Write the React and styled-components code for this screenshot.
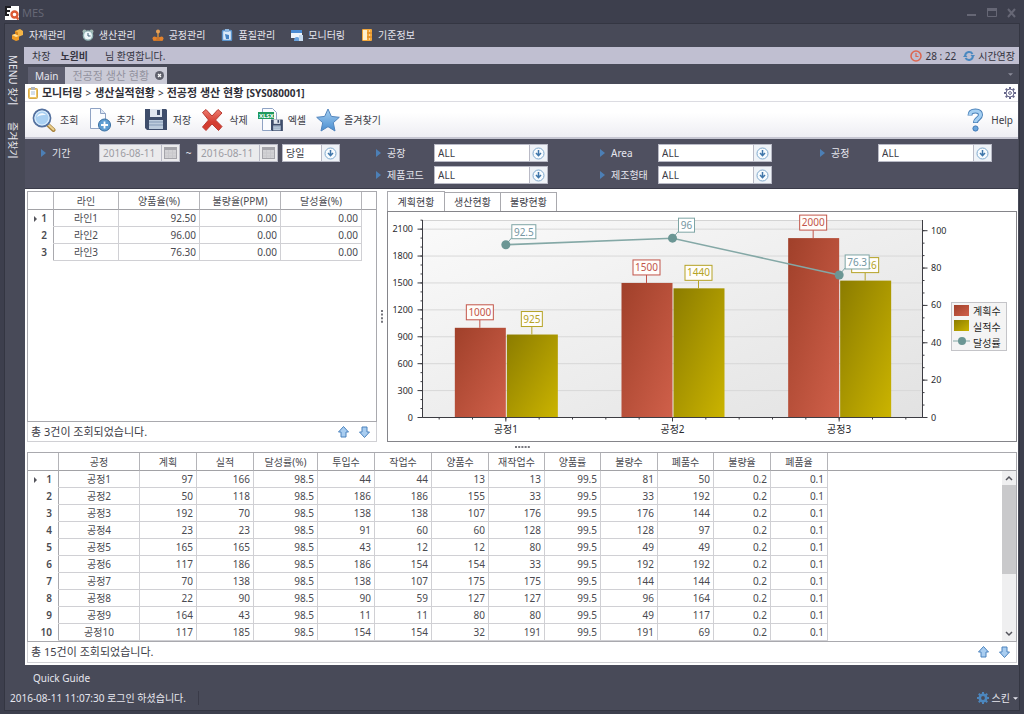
import React from "react";
import styled, { createGlobalStyle } from "styled-components";

const Global = createGlobalStyle`
  *, *::before, *::after { box-sizing: border-box; }
  body { margin: 0; background: #3d3f4d; }
  body, button, input, select, table {
    font-family: "Noto Sans", "Noto Sans CJK KR", sans-serif;
    font-size: 10px;
    line-height: 14px;
  }
  button { margin: 0; padding: 0; border: 0; background: none; color: inherit; cursor: pointer; }
  a { color: inherit; text-decoration: none; }
  svg { display: block; flex: none; }
`;

/* ---------- window shell ---------- */

const Window = styled.div`
  display: flex;
  flex-direction: column;
  min-height: 100vh;
  padding: 0 4px 3px;
  background: #3d3f4d;
  color: #e6e6ee;
`;
const TitleBar = styled.header`
  display: flex;
  align-items: center;
  gap: 3px;
  height: 23px;
  padding: 2px 4px 0 1px;
  color: #666775;
  font-size: 11px;
`;
const WindowButtons = styled.div`
  display: flex;
  gap: 10px;
  margin-left: auto;
`;
const Frame = styled.div`
  display: flex;
  flex: 1;
  flex-direction: column;
  border: 1px solid #343642;
  background: #484a58;
`;
const MenuBar = styled.nav`
  display: flex;
  align-items: center;
  gap: 16px;
  height: 23px;
  padding: 0 7px 2px;
`;
const MenuItem = styled.button`
  display: flex;
  align-items: center;
  gap: 5px;
  white-space: nowrap;
`;
const Body = styled.div`
  display: flex;
`;
const Sidebar = styled.aside`
  display: flex;
  flex: none;
  flex-direction: column;
  align-items: center;
  gap: 16px;
  width: 19px;
  padding: 8px 3px 0 0;
`;
const SideTab = styled.button`
  writing-mode: vertical-rl;
  text-orientation: sideways;
  white-space: nowrap;
`;
const Main = styled.main`
  display: flex;
  flex: 1;
  flex-direction: column;
  min-width: 0;
`;
const WelcomeBar = styled.div`
  display: flex;
  align-items: center;
  height: 17px;
  padding: 0 4px 0 8px;
  background: #c0bfd1;
  color: #34343f;
  white-space: nowrap;
`;
const UserName = styled.b`
  margin: 0 17px 0 10px;
`;
const Session = styled.div`
  display: flex;
  align-items: center;
  gap: 3px;
  margin-left: auto;
`;
const ExtendButton = styled.button`
  display: flex;
  align-items: center;
  gap: 3px;
  margin-left: 4px;
`;
const TabStrip = styled.div`
  display: flex;
  align-items: flex-end;
  height: 20px;
  padding: 0 6px 0 4px;
`;
const PageTab = styled.div`
  display: flex;
  align-items: center;
  gap: 6px;
  height: 17px;
  padding: ${(p) => (p.$active ? "0 3px 0 7px" : "0 7px")};
  background: ${(p) => (p.$active ? "#cacad6" : "#5d5e6f")};
  color: ${(p) => (p.$active ? "#92929e" : "#e6e6ee")};
  font-size: ${(p) => (p.$active ? "11px" : "10px")};
`;
const TabMenu = styled.button`
  margin: 0 0 8px auto;
`;

/* ---------- page ---------- */

const Page = styled.div`
  margin: 0 1px;
  background: #fff;
  color: #3c3c46;
`;
const Breadcrumb = styled.div`
  display: flex;
  align-items: center;
  gap: 4px;
  height: 18px;
  padding: 0 2px 0 3px;
  border-bottom: 1px solid #dcdce2;
  color: #2f2f38;
  font-size: 11px;
  font-weight: 700;
`;
const Crumbs = styled.span`
  display: flex;
  align-items: center;
  gap: 3px;
  white-space: nowrap;
`;
const CrumbMark = styled.span`
  font-size: 10px;
  font-weight: 400;
`;
const ScreenCode = styled.span`
  font-size: 10px;
`;
const GearButton = styled.button`
  margin-left: auto;
`;
const Toolbar = styled.div`
  display: flex;
  align-items: center;
  gap: 10px;
  height: 37px;
  padding: 0 5px 0 7px;
  border-bottom: 2px solid #c6c6d2;
  background: linear-gradient(#fff 30%, #eeeef3);
`;
const Tool = styled.button`
  display: flex;
  align-items: center;
  gap: 4px;
  white-space: nowrap;
  &:last-child { margin-left: auto; }
`;
const Filters = styled.form`
  display: grid;
  grid-template-columns: 335fr 224fr 220fr 198fr;
  row-gap: 4px;
  padding: 5px 0 4px 16px;
  border-bottom: 1px solid #3a3b49;
  background: #4f5060;
`;
const Field = styled.div`
  display: flex;
  align-items: center;
  grid-column: ${(p) => p.$column};
  height: 18px;
  color: #e6e6ee;
`;
const FieldLabel = styled.label`
  display: flex;
  align-items: center;
  gap: 6px;
  width: 58px;
  white-space: nowrap;
  &::before {
    content: "";
    border: 4px solid transparent;
    border-left: 5px solid #4c7fb6;
    border-right: 0;
  }
`;
const Control = styled.span`
  position: relative;
  display: flex;
  width: ${(p) => p.$width};
  height: 18px;
  border: 1px solid #b9bac6;
  background: ${(p) => (p.$off ? "#ebebed" : "#fff")};
`;
const Select = styled.select`
  flex: 1;
  min-width: 0;
  padding: 0 20px 0 3px;
  border: 0;
  background: transparent;
  color: #3c3c46;
  appearance: none;
`;
const DateInput = styled.input`
  flex: 1;
  min-width: 0;
  padding: 0 0 0 3px;
  border: 0;
  background: transparent;
  color: #9c9ca3;
`;
const DropMark = styled.span`
  position: absolute;
  top: 0;
  right: 0;
  display: grid;
  place-items: center;
  width: 18px;
  height: 16px;
  border-left: 1px solid #b9bac6;
  background: #eff3f8;
  pointer-events: none;
`;
const CalendarButton = styled.button`
  display: grid;
  place-items: center;
  width: 18px;
  border-left: 1px solid #b9bac6;
`;
const Tilde = styled.span`
  width: 17px;
  text-align: center;
`;
const PeriodGap = styled.span`
  width: 4px;
`;

/* ---------- panels ---------- */

const Workspace = styled.div`
  padding: 2px 1px 2px 2px;
`;
const Split = styled.div`
  display: flex;
`;
const LinePanel = styled.section`
  display: flex;
  flex: 0 0 350px;
  flex-direction: column;
`;
const GridBox = styled.div`
  position: relative;
  flex: 1;
  border: 1px solid #a9a9ae;
`;
const Grid = styled.table`
  width: 100%;
  border-spacing: 0;
  table-layout: fixed;
  color: #4a4a50;
`;
const Col = styled.col`
  width: ${(p) => p.$width};
`;
const Th = styled.th`
  height: 18px;
  padding: 0;
  border-right: 1px solid #b4b4b8;
  border-bottom: 1px solid #a2a2a6;
  font-weight: 400;
  white-space: nowrap;
  &:last-child { border-right: 0; }
`;
const Td = styled.td`
  height: 17px;
  padding: ${(p) => (p.$center ? "0" : "0 3px 0 0")};
  border-right: 1px solid #d0d0d4;
  border-bottom: 1px solid #d0d0d4;
  line-height: 12px;
  text-align: ${(p) => (p.$center ? "center" : "right")};
`;
const RowHead = styled.th`
  height: 17px;
  padding: 0 6px 0 0;
  border-right: 1px solid #a9a9ae;
  border-bottom: 1px solid transparent;
  font-weight: 600;
  line-height: 12px;
  text-align: right;
`;
const Marker = styled.span`
  display: inline-block;
  margin-right: ${(p) => p.$gap};
  border: 3px solid transparent;
  border-left: 3px solid #55555c;
  border-right: 0;
`;
const GridFooter = styled.div`
  display: flex;
  align-items: center;
  gap: 10px;
  height: ${(p) => p.$height};
  padding: 0 6px 0 3px;
  border: 1px solid #d0d0d4;
  border-top: 0;
  font-size: ${(p) => p.$size};
`;
const Count = styled.span`
  flex: 1;
`;
const Splitter = styled.div`
  display: flex;
  flex: none;
  align-items: center;
  justify-content: center;
  width: ${(p) => (p.$vertical ? "10px" : "auto")};
  height: ${(p) => (p.$vertical ? "auto" : "10px")};
`;
const ChartPanel = styled.section`
  flex: 1;
  min-width: 0;
`;
const ChartTabs = styled.div`
  display: flex;
  align-items: flex-end;
  height: 20px;
`;
const ChartTab = styled.button`
  width: ${(p) => (p.$active ? "58px" : "56px")};
  height: ${(p) => (p.$active ? "20px" : "19px")};
  border: 1px solid #a9a9ae;
  border-bottom: 0;
  border-left-width: ${(p) => (p.$active ? "1px" : "0")};
`;
const ChartBox = styled.div`
  border: 1px solid #85858a;
`;
const Chart = styled.svg`
  width: 100%;
  height: auto;
  font-size: 10px;
`;
const AxisText = styled.text`
  fill: #2a2a2e;
  font-size: 9px;
`;
const Scrollbar = styled.div`
  position: absolute;
  top: 18px;
  right: 0;
  bottom: 0;
  display: flex;
  flex-direction: column;
  align-items: center;
  width: 14px;
  background: #efeff0;
`;
const ScrollButton = styled.button`
  display: grid;
  place-items: center;
  width: 14px;
  height: 14px;
`;
const Thumb = styled.div`
  width: 14px;
  height: 89px;
  margin-bottom: auto;
  background: #c9c9cb;
`;

/* ---------- footer ---------- */

const QuickGuide = styled.div`
  padding: 6px 0 6px 28px;
`;
const StatusBar = styled.footer`
  display: flex;
  align-items: center;
  height: 14px;
  padding: 0 1px 0 5px;
`;
const LoginText = styled.span`
  padding-right: 12px;
  border-right: 1px solid #3a3b48;
`;
const SkinButton = styled.button`
  display: flex;
  align-items: center;
  gap: 3px;
  margin-left: auto;
`;

/* ---------- icons ---------- */

const Svg = ({ w = 12, h = w, box, children }) => (
  <svg width={w} height={h} viewBox={box || `0 0 ${w} ${h}`} fill="none" aria-hidden="true">{children}</svg>
);

const LogoIcon = () => (
  <Svg w={14}>
    <path d="M0 0h14v14H0z" fill="#fff" />
    <path d="M0 1h6M0 5h5M0 9h4M1 1v8" stroke="#1d1d22" strokeWidth="2" />
    <circle cx="9.5" cy="8.5" r="3" stroke="#dc5a35" strokeWidth="2.4" />
    <path d="M11 10l2.5 3.5" stroke="#dc5a35" strokeWidth="2.4" />
  </Svg>
);
const BoxIcon = () => (
  <Svg>
    <path d="M3 2l5-2 3 2v4L6 8 3 6z" fill="#f6b545" />
    <path d="M3 2l3 1.5V8L3 6z" fill="#d7851b" />
    <path d="M0 6l3-1 4 2v4l-3 1-4-2z" fill="#f09b24" />
    <path d="M0 6l4 2 3-1-4-2z" fill="#ffe09a" />
  </Svg>
);
const AlarmIcon = () => (
  <Svg>
    <circle cx="2.5" cy="2.5" r="2" fill="#9fb6b0" />
    <circle cx="9.5" cy="2.5" r="2" fill="#9fb6b0" />
    <circle cx="6" cy="6.5" r="4.6" fill="#eef8fa" stroke="#93b6b6" strokeWidth="1.4" />
    <path d="M6 4v3h2.5" stroke="#3f5f74" />
  </Svg>
);
const ProcessIcon = () => (
  <Svg>
    <path d="M6 3v5" stroke="#c98a42" strokeWidth="1.6" />
    <path d="M1 12l2-4h6l2 4z" fill="#c9762c" />
    <circle cx="6" cy="2.5" r="2" fill="#e8a052" />
    <circle cx="2.5" cy="9.5" r="2" fill="#e3822c" />
    <circle cx="9.5" cy="9.5" r="2" fill="#e3822c" />
  </Svg>
);
const QualityIcon = () => (
  <Svg>
    <rect x="1.5" y="1.5" width="9" height="10" rx="1" fill="#dcebfa" stroke="#5b93cc" strokeWidth="1.4" />
    <path d="M4 0h4v3H4z" fill="#8fb8e2" />
    <path d="M4 5l4 1v4H5z" fill="#4683c4" />
  </Svg>
);
const MonitorIcon = () => (
  <Svg>
    <path d="M0 1h11v8H0z" fill="#eef4fb" />
    <path d="M0 1h11v3H0z" fill="#4b8bd3" />
    <path d="M3 12c0-3 1-4 3-4s2 1 3 2v2z" fill="#6ba3de" />
    <path d="M8 6h4v6H8z" fill="#c7dbf0" />
  </Svg>
);
const CabinetIcon = () => (
  <Svg>
    <rect x="1" y="0" width="10" height="12" rx="1" fill="#f3a83c" />
    <path d="M2 1h4v10H2z" fill="#fff1cf" />
    <path d="M6 4h5M6 8h5" stroke="#d98423" />
    <path d="M8 2h1M8 6h1M8 10h1" stroke="#fff" />
  </Svg>
);
const ClockIcon = () => (
  <Svg>
    <circle cx="6" cy="6" r="5" stroke="#dd6650" strokeWidth="1.5" />
    <path d="M6 3v3.5h2.5" stroke="#dd6650" strokeWidth="1.2" />
  </Svg>
);
const RefreshIcon = () => (
  <Svg>
    <path d="M2.200 5A4 4 0 019.500 4M9.800 7A4 4 0 012.500 8" stroke="#4a88c0" strokeWidth="2" />
    <path d="M7.500 5H12L9.800 8zM0 7h4.500L2.200 4z" fill="#4a88c0" />
  </Svg>
);
const CloseIcon = () => (
  <Svg w={9}>
    <circle cx="4.5" cy="4.5" r="4.5" fill="#5f606c" />
    <path d="M3 3l3 3M6 3L3 6" stroke="#fff" strokeWidth="1.2" />
  </Svg>
);
const ClipboardIcon = () => (
  <Svg w={10} h={12}>
    <rect x=".5" y="1.5" width="9" height="10" rx="1" fill="#ecc565" stroke="#d9aa4a" />
    <path d="M2 3h6v7H2z" fill="#fff" />
    <path d="M3 0h4v3H3z" fill="#b0b4bd" />
    <path d="M3 5h4M3 7h4" stroke="#a9bdd8" />
  </Svg>
);
const teeth = [0, 45, 90, 135, 180, 225, 270, 315];
const GearIcon = ({ color, solid }) => (
  <Svg w={12}>
    {teeth.map((a) => (
      <path key={a} d="M6 0v2.500" stroke={color} strokeWidth="2" transform={`rotate(${a} 6 6)`} />
    ))}
    <circle cx="6" cy="6" r={solid ? 3.2 : 4} stroke={color} strokeWidth={solid ? 2.6 : 1} fill={solid ? "none" : "#fff"} />
    {!solid && <circle cx="6" cy="6" r="1.4" stroke={color} />}
  </Svg>
);
const SearchIcon = () => (
  <Svg w={24}>
    <path d="M15 16l6.500 6" stroke="#a8833d" strokeWidth="4" strokeLinecap="round" />
    <path d="M15.500 16l6 5.500" stroke="#ecd08e" strokeWidth="2" strokeLinecap="round" />
    <circle cx="10" cy="10" r="8.5" fill="#a9d0f2" stroke="#54719f" strokeWidth="1.8" />
    <circle cx="10" cy="10" r="7" stroke="#d9ecfb" strokeWidth="1.2" />
    <path d="M5 9c1-4 6-5 9-2-3 0-6 0-9 2z" fill="#f4faff" />
  </Svg>
);
const PageShape = () => <path d="M2.500.500h10l5 5v15h-15z" fill="#fafcff" stroke="#8fa3c4" />;
const AddIcon = () => (
  <Svg w={24}>
    <PageShape />
    <path d="M12.500.500v5h5" stroke="#8fa3c4" fill="#dfe8f5" />
    <circle cx="16.5" cy="17" r="6" fill="#5f9ed2" stroke="#366c9f" />
    <path d="M16.500 13.500v7M13 17h7" stroke="#fff" strokeWidth="1.8" />
  </Svg>
);
const DiskShape = () => (
  <>
    <path d="M0 1h21l1 1v20H2l-2-2z" fill="#3e4d6b" />
    <path d="M5 1h12v8H5z" fill="#dfe5ee" />
    <path d="M12 2h3v5h-3z" fill="#3e4d6b" />
    <path d="M4 12h14v9H4z" fill="#bccbdc" />
    <path d="M4 14h14M4 17h14" stroke="#8499b5" />
  </>
);
const SaveIcon = () => <Svg w={24}><DiskShape /></Svg>;
const DeleteIcon = () => (
  <Svg w={24}>
    <defs>
      <linearGradient id="cross" x2="0" y2="1"><stop stopColor="#ee7d70" /><stop offset=".6" stopColor="#d43c30" /></linearGradient>
    </defs>
    <path
      d="M1.500 4.500L5 1.500l6 6.500 6-6.500 4 3.500-6.500 7 6.500 6.500-3.500 4L11 16l-6 6.500-3.500-3.500L7.500 12z"
      fill="url(#cross)" stroke="#b83a32" strokeLinejoin="round"
    />
  </Svg>
);
const ExcelIcon = () => (
  <Svg w={26} h={24}>
    <path d="M4.500.500h10l4 4v18h-14z" fill="#fafcff" stroke="#8fa3c4" />
    <path d="M0 4h16v7H0z" fill="#1f9a5c" />
    <text x="1" y="10" fill="#fff" fontSize="6" fontWeight="700">XLSX</text>
    <g transform="translate(13 11) scale(.54)"><DiskShape /></g>
  </Svg>
);
const StarIcon = () => (
  <Svg w={24}>
    <defs>
      <linearGradient id="star" x2="0" y2="1"><stop stopColor="#a5d0f2" /><stop offset="1" stopColor="#4a8dd0" /></linearGradient>
    </defs>
    <path d="M12 1l3.300 7.400 8 .9-6 5.400 1.700 8.300-7-4.300L5 23l1.700-8.300-6-5.400 8-.9z" fill="url(#star)" stroke="#5285bd" strokeLinejoin="round" />
  </Svg>
);
const HelpIcon = () => (
  <Svg w={20} h={24}>
    <path d="M3 7.500C3 4 5 3 8.500 3S13.500 4.500 13.500 7C13.500 10.500 8.500 10.500 8.500 15" stroke="#4a80b8" strokeWidth="5" />
    <path d="M3 7C3 4 5 3 8.500 3S13.500 4.500 13.500 7C13.500 10.500 8.500 10.500 8.500 14.300" stroke="#a4cff2" strokeWidth="3.2" />
    <circle cx="8.500" cy="20.500" r="2.600" fill="#6aa5dc" stroke="#3f78b5" />
  </Svg>
);
const DropIcon = () => (
  <Svg w={13}>
    <circle cx="6.5" cy="6.5" r="5.5" fill="#f7fbfe" stroke="#7fa9cd" />
    <path d="M6.500 3v6M4 6l2.500 2.700L9 6" stroke="#3f76aa" strokeWidth="1.5" />
  </Svg>
);
const CalendarIcon = () => (
  <Svg w={13} h={12}>
    <rect x=".5" y=".5" width="12" height="11" fill="#d2d2d5" stroke="#a4a4aa" />
    <path d="M0 1.500h13" stroke="#a4a4aa" strokeWidth="3" />
    <path d="M4.500 3v8M8.500 3v8M1 6h11M1 9h11" stroke="#c8c8cc" />
  </Svg>
);
const ArrowIcon = ({ down }) => (
  <Svg w={11} h={12}>
    <path
      d="M5.500.500l5 5.500H8v5H3V6H.500z"
      transform={down ? "rotate(180 5.5 6)" : undefined}
      fill="#a9cdf0" stroke="#4b82bd" strokeLinejoin="round"
    />
  </Svg>
);
const Chevron = ({ down }) => (
  <Svg w={8} h={6}><path d={down ? "M1 1l3 3 3-3" : "M1 5l3-3 3 3"} stroke="#55555c" strokeWidth="1.5" /></Svg>
);
const Caret = ({ color, w = 5 }) => <Svg w={w} h={3} box="0 0 6 3"><path d="M0 0h6L3 3z" fill={color} /></Svg>;
const Dots = ({ vertical }) => (
  <Svg w={vertical ? 2 : 15} h={vertical ? 13 : 2}>
    <path d={vertical ? "M1 0v13" : "M0 1h15"} stroke="#77777e" strokeWidth="2" strokeDasharray={vertical ? "2 1.6" : "2 1.2"} />
  </Svg>
);

/* ---------- data ---------- */

const menus = [
  ["자재관리", BoxIcon], ["생산관리", AlarmIcon], ["공정관리", ProcessIcon],
  ["품질관리", QualityIcon], ["모니터링", MonitorIcon], ["기준정보", CabinetIcon],
];
const tools = [
  ["조회", SearchIcon], ["추가", AddIcon], ["저장", SaveIcon], ["삭제", DeleteIcon],
  ["엑셀", ExcelIcon], ["즐겨찾기", StarIcon], ["Help", HelpIcon],
];
const selects = [
  ["plant", "공장", 2], ["area", "Area", 3], ["process", "공정", 4],
  ["product", "제품코드", 2], ["form", "제조형태", 3],
];
const lineHeads = ["라인", "양품율(%)", "불량율(PPM)", "달성율(%)"];
const lineRows = [
  ["라인1", "92.50", "0.00", "0.00"],
  ["라인2", "96.00", "0.00", "0.00"],
  ["라인3", "76.30", "0.00", "0.00"],
];
const processHeads = ["공정", "계획", "실적", "달성률(%)", "투입수", "작업수", "양품수", "재작업수", "양품률", "불량수", "폐품수", "불량율", "폐품율"];
const processRows = [
  [97, 166, 44, 44, 13, 13, 81, 50],
  [50, 118, 186, 186, 155, 33, 33, 192],
  [192, 70, 138, 138, 107, 176, 176, 144],
  [23, 23, 91, 60, 60, 128, 128, 97],
  [165, 165, 43, 12, 12, 80, 49, 49],
  [117, 186, 186, 154, 154, 33, 192, 192],
  [70, 138, 138, 107, 175, 175, 144, 144],
  [22, 90, 90, 59, 127, 127, 96, 164],
  [164, 43, 11, 11, 80, 80, 49, 117],
  [117, 185, 154, 154, 32, 191, 191, 69],
].map((r, i) => [`공정${i + 1}`, r[0], r[1], "98.5", r[2], r[3], r[4], r[5], "99.5", r[6], r[7], "0.2", "0.1"]);
const series = [
  { name: "공정1", plan: 1000, actual: 925, rate: 92.5 },
  { name: "공정2", plan: 1500, actual: 1440, rate: 96 },
  { name: "공정3", plan: 2000, actual: 1526, rate: 76.3 },
];

/* ---------- composed parts ---------- */

const DataGrid = ({ label, widths, heads, rows, markerGap }) => (
  <Grid aria-label={label}>
    <colgroup>
      {widths.map((w, i) => <Col key={i} $width={`${w}px`} />)}
      <col />
    </colgroup>
    <thead>
      <tr>
        <Th />
        {heads.map((h) => <Th key={h} scope="col">{h}</Th>)}
        <Th />
      </tr>
    </thead>
    <tbody>
      {rows.map((row, i) => (
        <tr key={row[0]}>
          <RowHead scope="row">{i === 0 && <Marker $gap={markerGap} />}{i + 1}</RowHead>
          {row.map((v, j) => <Td key={j} $center={j === 0}>{v}</Td>)}
        </tr>
      ))}
    </tbody>
  </Grid>
);

const LEFT = 34.5, RIGHT = 534.5, TOP = 8, BASE = 205.5, BAR = 51;
const step = (RIGHT - LEFT) / 3;
const yLeft = (v) => BASE - v * 0.0897;
const yRight = (v) => BASE - v * 1.868;
const xAt = (i) => LEFT + step * (i + 0.5);
const range = (n) => Array.from({ length: n }, (_, i) => i);

const ValueTag = ({ x, y, value, color }) => {
  const w = String(value).length * 6 + 3;
  return (
    <g>
      <path d={`M${x} ${y}v-8`} stroke={color} />
      <rect x={x - w / 2} y={y - 23} width={w} height="15" fill="#fffdfa" stroke={color} />
      <text x={x} y={y - 12} textAnchor="middle" fill={color}>{value}</text>
    </g>
  );
};
const RateTag = ({ x, y, value }) => {
  const w = value === 96 ? 16 : 24;
  return (
    <g>
      <path d={`M${x} ${y}l6-7`} stroke="#7ea5a5" />
      <rect x={x + 6} y={y - 20} width={w} height="14" fill="#fff" stroke="#7ea5a5" />
      <text x={x + 6 + w / 2} y={y - 9} textAnchor="middle" fill="#7696a2">{value}</text>
    </g>
  );
};

const ProductionChart = () => (
  <Chart viewBox="0 0 628 229" role="img" aria-label="계획현황">
    <defs>
      <linearGradient id="plot" x2="1" y2="1"><stop stopColor="#fafafa" /><stop offset="1" stopColor="#e2e2e2" /></linearGradient>
      <linearGradient id="red" x2="1" y2="1"><stop stopColor="#a0402a" /><stop offset="1" stopColor="#d0604a" /></linearGradient>
      <linearGradient id="gold" x2="1" y2="1"><stop stopColor="#8b7c00" /><stop offset="1" stopColor="#cbb400" /></linearGradient>
    </defs>
    <rect x={LEFT} y={TOP} width={RIGHT - LEFT} height={BASE - TOP} fill="url(#plot)" />
    <path d={`M${LEFT} ${TOP + 0.5}H${RIGHT}`} stroke="#d4d4d4" />
    {range(8).map((i) => (
      <g key={i}>
        <path d={`M${LEFT} ${yLeft(i * 300)}H${RIGHT}`} stroke="#d8d8d8" />
        <path d={`M${LEFT - 5} ${yLeft(i * 300)}h5`} stroke="#3c3c42" />
        <AxisText x="25" y={yLeft(i * 300) + 3} textAnchor="end">{i * 300}</AxisText>
      </g>
    ))}
    {range(23).map((i) => <path key={i} d={`M${LEFT - 2} ${yLeft(i * 100)}h2`} stroke="#3c3c42" />)}
    {range(6).map((i) => (
      <g key={i}>
        <path d={`M${RIGHT} ${yRight(i * 20)}h5`} stroke="#3c3c42" />
        <AxisText x="543" y={yRight(i * 20) + 3}>{i * 20}</AxisText>
      </g>
    ))}
    {range(16).map((i) => <path key={i} d={`M${RIGHT} ${yRight((i * 20) / 3)}h2`} stroke="#3c3c42" />)}
    {range(15).map((i) => <path key={i} d={`M${LEFT + ((i + 0.5) * step) / 5} ${BASE}v2`} stroke="#3c3c42" />)}
    {series.map((s, i) => (
      <g key={s.name}>
        <rect x={xAt(i) - BAR} y={yLeft(s.plan)} width={BAR} height={BASE - yLeft(s.plan)} fill="url(#red)" />
        <rect x={xAt(i) + 1} y={yLeft(s.actual)} width={BAR} height={BASE - yLeft(s.actual)} fill="url(#gold)" />
        <path d={`M${xAt(i)} ${BASE}v4`} stroke="#3c3c42" />
        <text x={xAt(i)} y="221" textAnchor="middle" fill="#2a2a2e">{s.name}</text>
      </g>
    ))}
    <path d={`M${LEFT} ${TOP}V${BASE}H${RIGHT}V${TOP}`} stroke="#3c3c42" fill="none" />
    {series.map((s, i) => (
      <g key={s.name}>
        <ValueTag x={xAt(i) - 26} y={yLeft(s.plan)} value={s.plan} color="#c2554a" />
        <ValueTag x={xAt(i) + 26} y={yLeft(s.actual)} value={s.actual} color="#b5a326" />
      </g>
    ))}
    <polyline points={series.map((s, i) => `${xAt(i)},${yRight(s.rate)}`).join(" ")} fill="none" stroke="#84a8a6" strokeWidth="1.5" />
    {series.map((s, i) => (
      <g key={s.name}>
        <RateTag x={xAt(i)} y={yRight(s.rate)} value={s.rate} />
        <circle cx={xAt(i)} cy={yRight(s.rate)} r="4.5" fill="#6b9694" />
      </g>
    ))}
    <rect x="563.5" y="90.5" width="55" height="48" fill="#f4f4f4" stroke="#c4c4c8" />
    <rect x="566" y="93" width="15" height="11" fill="url(#red)" />
    <rect x="566" y="108" width="15" height="11" fill="url(#gold)" />
    <path d="M565 129h17" stroke="#84a8a6" />
    <circle cx="574" cy="129" r="4" fill="#6b9694" />
    {["계획수", "실적수", "달성률"].map((t, i) => (
      <text key={t} x="585" y={103 + i * 16} fill="#1f1f24">{t}</text>
    ))}
  </Chart>
);

const GridStatus = ({ height, size, children }) => (
  <GridFooter $height={height} $size={size}>
    <Count>{children}</Count>
    <button type="button" aria-label="위로"><ArrowIcon /></button>
    <button type="button" aria-label="아래로"><ArrowIcon down /></button>
  </GridFooter>
);

const DateField = ({ id, label }) => (
  <Control $width="81px" $off>
    <DateInput id={id} aria-label={label} defaultValue="2016-08-11" readOnly />
    <CalendarButton type="button" aria-label="달력"><CalendarIcon /></CalendarButton>
  </Control>
);
const SelectField = ({ id, value, width, label }) => (
  <Control $width={width}>
    <Select id={id} aria-label={label}><option>{value}</option></Select>
    <DropMark><DropIcon /></DropMark>
  </Control>
);

export default function App() {
  return (
    <Window>
      <Global />
      <TitleBar>
        <LogoIcon />
        <span>MES</span>
        <WindowButtons>
          <button type="button" aria-label="최소화"><Svg w={10}><path d="M0 7h9" stroke="#666775" strokeWidth="2" /></Svg></button>
          <button type="button" aria-label="최대화"><Svg w={10}><path d="M0 1.500h10" stroke="#666775" strokeWidth="3" /><path d="M.500 1v7.500h9V1" stroke="#666775" /></Svg></button>
          <button type="button" aria-label="닫기"><Svg w={9} h={10}><path d="M1 1l7 8M8 1L1 9" stroke="#666775" strokeWidth="2" /></Svg></button>
        </WindowButtons>
      </TitleBar>
      <Frame>
        <MenuBar>
          {menus.map(([name, Icon]) => <MenuItem key={name} type="button"><Icon />{name}</MenuItem>)}
        </MenuBar>
        <Body>
          <Sidebar>
            <SideTab type="button">MENU 찾기</SideTab>
            <SideTab type="button">즐겨찾기</SideTab>
          </Sidebar>
          <Main>
            <WelcomeBar>
              <span>차장</span>
              <UserName>노윈비</UserName>
              <span>님 환영합니다.</span>
              <Session>
                <ClockIcon />
                <span>28 : 22</span>
                <ExtendButton type="button"><RefreshIcon />시간연장</ExtendButton>
              </Session>
            </WelcomeBar>
            <TabStrip>
              <PageTab><a href="#main">Main</a></PageTab>
              <PageTab $active>
                <a href="#status">전공정 생산 현황</a>
                <button type="button" aria-label="탭 닫기"><CloseIcon /></button>
              </PageTab>
              <TabMenu type="button" aria-label="탭 목록"><Caret color="#8a8b98" /></TabMenu>
            </TabStrip>
            <Page>
              <Breadcrumb>
                <ClipboardIcon />
                <Crumbs>
                  <span>모니터링</span>
                  <CrumbMark>&gt;</CrumbMark>
                  <span>생산실적현황</span>
                  <CrumbMark>&gt;</CrumbMark>
                  <span>전공정 생산 현황</span>
                  <ScreenCode>[SYS080001]</ScreenCode>
                </Crumbs>
                <GearButton type="button" aria-label="설정"><GearIcon color="#66668a" /></GearButton>
              </Breadcrumb>
              <Toolbar>
                {tools.map(([name, Icon]) => <Tool key={name} type="button"><Icon />{name}</Tool>)}
              </Toolbar>
              <Filters>
                <Field $column={1}>
                  <FieldLabel htmlFor="from">기간</FieldLabel>
                  <DateField id="from" label="시작일" />
                  <Tilde>~</Tilde>
                  <DateField id="to" label="종료일" />
                  <PeriodGap />
                  <SelectField id="period" label="기간 선택" value="당일" width="58px" />
                </Field>
                {selects.map(([id, label, column]) => (
                  <Field key={id} $column={column}>
                    <FieldLabel htmlFor={id}>{label}</FieldLabel>
                    <SelectField id={id} value="ALL" width="114px" />
                  </Field>
                ))}
              </Filters>
              <Workspace>
                <Split>
                  <LinePanel>
                    <GridBox>
                      <DataGrid label="라인" widths={[26, 65, 81, 81, 81]} heads={lineHeads} rows={lineRows} markerGap="4px" />
                    </GridBox>
                    <GridStatus height="20px" size="11px">총 3건이 조회되었습니다.</GridStatus>
                  </LinePanel>
                  <Splitter $vertical><Dots vertical /></Splitter>
                  <ChartPanel>
                    <ChartTabs>
                      <ChartTab type="button" $active>계획현황</ChartTab>
                      <ChartTab type="button">생산현황</ChartTab>
                      <ChartTab type="button">불량현황</ChartTab>
                    </ChartTabs>
                    <ChartBox><ProductionChart /></ChartBox>
                  </ChartPanel>
                </Split>
                <Splitter><Dots /></Splitter>
                <GridBox>
                  <DataGrid
                    label="공정"
                    widths={[31, 81, 57, 57, 64, 57, 57, 57, 56, 56, 57, 56, 57, 57]}
                    heads={processHeads}
                    rows={processRows}
                    markerGap="9px"
                  />
                  <Scrollbar>
                    <ScrollButton type="button" aria-label="위로 스크롤"><Chevron /></ScrollButton>
                    <Thumb />
                    <ScrollButton type="button" aria-label="아래로 스크롤"><Chevron down /></ScrollButton>
                  </Scrollbar>
                </GridBox>
                <GridStatus height="21px" size="11px">총 15건이 조회되었습니다.</GridStatus>
              </Workspace>
            </Page>
          </Main>
        </Body>
        <QuickGuide>Quick Guide</QuickGuide>
        <StatusBar>
          <LoginText>2016-08-11 11:07:30 로그인 하셨습니다.</LoginText>
          <SkinButton type="button"><GearIcon color="#4c86bd" solid />스킨<Caret color="#e6e6ee" /></SkinButton>
        </StatusBar>
      </Frame>
    </Window>
  );
}
